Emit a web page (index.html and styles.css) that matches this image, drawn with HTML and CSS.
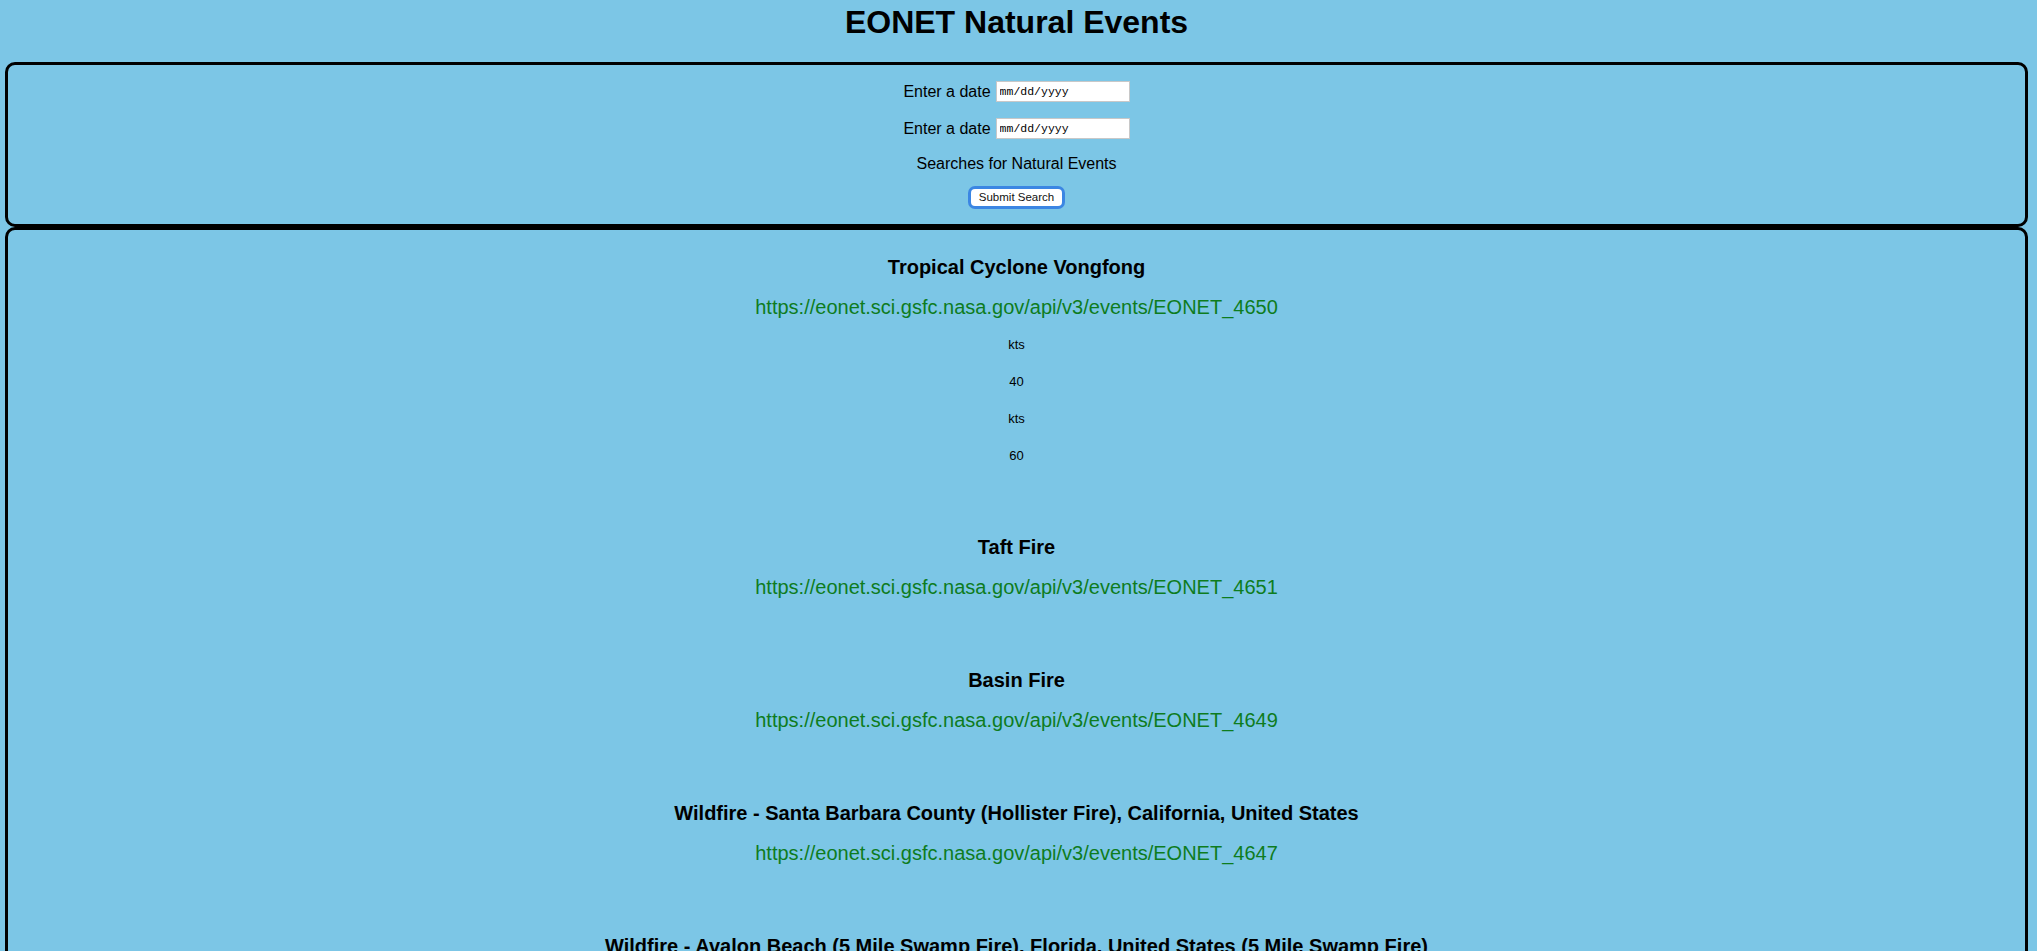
FILE: index.html
```html
<!DOCTYPE html>
<html lang="en">
<head>
<meta charset="utf-8">
<title>EONET Natural Events</title>
<link rel="stylesheet" href="styles.css">
</head>
<body>
  <h1 class="page-title">EONET Natural Events</h1>

  <form class="panel search-form">
    <div class="form-row">
      <label class="form-label" for="start">Enter a date</label>
      <input class="date-input" id="start" type="text" placeholder="mm/dd/yyyy">
    </div>
    <div class="form-row">
      <label class="form-label" for="end">Enter a date</label>
      <input class="date-input" id="end" type="text" placeholder="mm/dd/yyyy">
    </div>
    <div class="form-row form-note">Searches for Natural Events</div>
    <div class="form-row form-actions">
      <button class="submit-btn" type="button">Submit Search</button>
    </div>
  </form>

  <section class="panel results">
    <div class="event">
      <h3 class="event-title">Tropical Cyclone Vongfong</h3>
      <a class="event-link" href="#">https://eonet.sci.gsfc.nasa.gov/api/v3/events/EONET_4650</a>
      <div class="event-measures">
        <p class="measure">kts</p>
        <p class="measure">40</p>
        <p class="measure">kts</p>
        <p class="measure">60</p>
      </div>
    </div>
    <div class="event">
      <h3 class="event-title">Taft Fire</h3>
      <a class="event-link" href="#">https://eonet.sci.gsfc.nasa.gov/api/v3/events/EONET_4651</a>
    </div>
    <div class="event">
      <h3 class="event-title">Basin Fire</h3>
      <a class="event-link" href="#">https://eonet.sci.gsfc.nasa.gov/api/v3/events/EONET_4649</a>
    </div>
    <div class="event">
      <h3 class="event-title">Wildfire - Santa Barbara County (Hollister Fire), California, United States</h3>
      <a class="event-link" href="#">https://eonet.sci.gsfc.nasa.gov/api/v3/events/EONET_4647</a>
    </div>
    <div class="event">
      <h3 class="event-title">Wildfire - Avalon Beach (5 Mile Swamp Fire), Florida, United States (5 Mile Swamp Fire)</h3>
      <a class="event-link" href="#">https://eonet.sci.gsfc.nasa.gov/api/v3/events/EONET_4646</a>
    </div>
  </section>
</body>
</html>
```

FILE: styles.css
```css
html {
  background: #7cc6e6;
}

body {
  margin: 0 9px 0 5px;
  padding-top: 4px;
  font-family: "Liberation Sans", Arial, Helvetica, sans-serif;
  color: #000;
  text-align: center;
}

.page-title {
  margin: 0 0 21px;
  font-size: 32px;
  line-height: 37px;
  font-weight: bold;
}

.panel {
  border: 3px solid #000;
  border-radius: 10px;
}

.search-form {
  display: flex;
  flex-direction: column;
  align-items: center;
  gap: 16px;
  padding: 16px 0 15px;
  margin: 0;
}

.form-row {
  display: flex;
  align-items: center;
  justify-content: center;
  gap: 5px;
  height: 21px;
  font-size: 16px;
}

.form-note {
  height: 18px;
}

.form-actions {
  height: 23px;
  margin-top: -3px;
}

.date-input {
  box-sizing: border-box;
  width: 134px;
  height: 21px;
  margin: 0;
  padding: 0 3px;
  border: 1px solid #c8c8c8;
  background: #fff;
  font-family: "Liberation Mono", "Courier New", monospace;
  font-size: 11.5px;
  color: #000;
}

.date-input::placeholder {
  color: #000;
  opacity: 1;
}

.submit-btn {
  box-sizing: border-box;
  width: 91px;
  height: 17px;
  padding: 0;
  border: none;
  border-radius: 4px;
  background: #fff;
  box-shadow: 0 0 0 3px #3b86e3;
  font-family: "Liberation Sans", Arial, sans-serif;
  font-size: 11.5px;
  color: #111;
  line-height: 17px;
}

.results {
  padding: 26px 0 40px;
  min-height: 900px;
}

.event {
  display: flex;
  flex-direction: column;
  align-items: center;
  margin-bottom: 70px;
}

.event-title {
  margin: 0 0 17px;
  font-size: 20px;
  line-height: 23px;
  font-weight: bold;
}

.event-link {
  font-size: 20px;
  line-height: 23px;
  color: #0e7c1e;
  text-decoration: none;
}

.event-measures {
  display: flex;
  flex-direction: column;
  align-items: center;
  gap: 22px;
  margin-top: 18px;
  margin-bottom: 3px;
}

.measure {
  margin: 0;
  font-size: 13px;
  line-height: 15px;
}
```
